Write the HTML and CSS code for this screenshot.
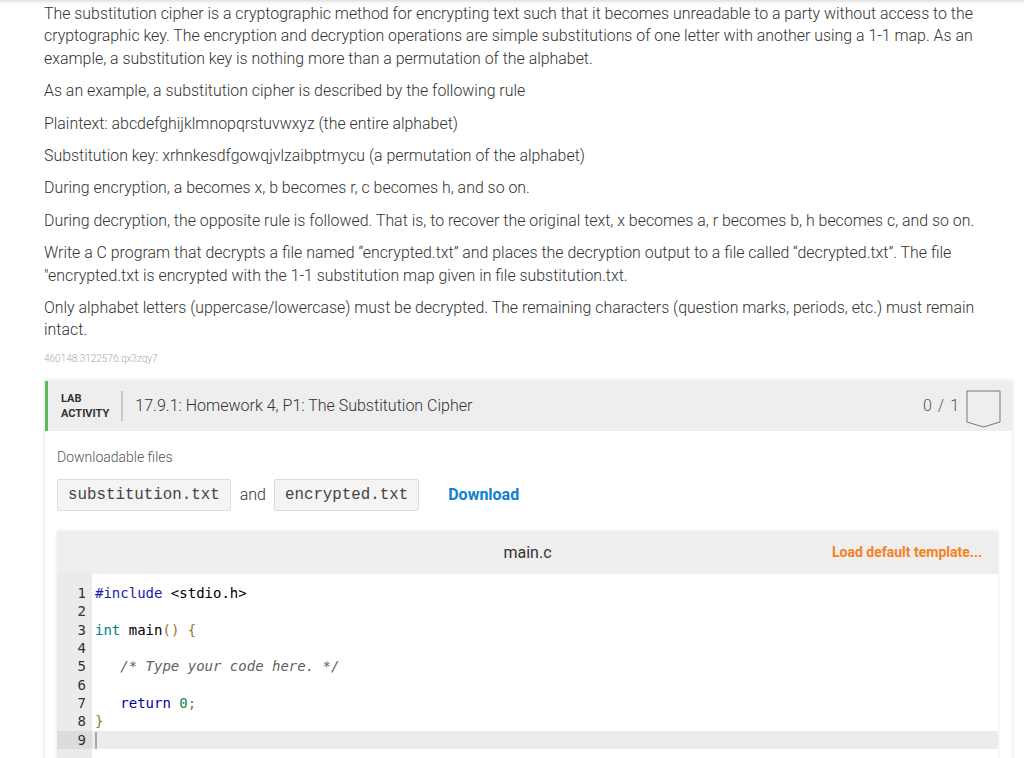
FILE: index.html
```html
<!DOCTYPE html>
<html>
<head>
<meta charset="utf-8">
<link rel="stylesheet" href="styles.css">
</head>
<body>
<div class="page">
  <div class="prose">
    <p>The substitution cipher is a cryptographic method for encrypting text such that it becomes unreadable to a party without access to the cryptographic key. The encryption and decryption operations are simple substitutions of one letter with another using a 1-1 map. As an example, a substitution key is nothing more than a permutation of the alphabet.</p>
    <p>As an example, a substitution cipher is described by the following rule</p>
    <p>Plaintext: abcdefghijklmnopqrstuvwxyz (the entire alphabet)</p>
    <p>Substitution key: xrhnkesdfgowqjvlzaibptmycu (a permutation of the alphabet)</p>
    <p>During encryption, a becomes x, b becomes r, c becomes h, and so on.</p>
    <p>During decryption, the opposite rule is followed. That is, to recover the original text, x becomes a, r becomes b, h becomes c, and so on.</p>
    <p>Write a C program that decrypts a file named “encrypted.txt” and places the decryption output to a file called “decrypted.txt”. The file "encrypted.txt is encrypted with the 1-1 substitution map given in file substitution.txt.</p>
    <p>Only alphabet letters (uppercase/lowercase) must be decrypted. The remaining characters (question marks, periods, etc.) must remain intact.</p>
    <div class="ident">460148.3122576.qx3zqy7</div>
  </div>

  <section class="lab">
    <header class="lab-head">
      <div class="lab-tag">LAB<br>ACTIVITY</div>
      <div class="lab-sep"></div>
      <div class="lab-title">17.9.1: Homework 4, P1: The Substitution Cipher</div>
      <div class="lab-score">0 / 1</div>
      <svg class="badge" width="35" height="38" viewBox="0 0 35 38">
        <path d="M1 1 H34 V32 L17.5 37 L1 32 Z" fill="none" stroke="#777" stroke-width="1"/>
      </svg>
    </header>
    <div class="lab-body">
      <div class="dl-label">Downloadable files</div>
      <div class="dl-row">
        <span class="chip">substitution.txt</span>
        <span class="and">and</span>
        <span class="chip">encrypted.txt</span>
        <a class="download">Download</a>
      </div>

      <div class="editor">
        <div class="ed-head">
          <span></span>
          <span class="ed-file">main.c</span>
          <span class="ed-load">Load default template...</span>
        </div>
        <div class="ed-body">
          <div class="gutter">
            <div class="ln">1</div><div class="ln">2</div><div class="ln">3</div><div class="ln">4</div><div class="ln">5</div><div class="ln">6</div><div class="ln">7</div><div class="ln">8</div><div class="ln active">9</div>
          </div>
          <div class="code">
            <div class="cl"><span class="k-pre">#include</span> &lt;stdio.h&gt;</div>
            <div class="cl">&nbsp;</div>
            <div class="cl"><span class="k-type">int</span> main<span class="k-pun">()</span> <span class="k-pun">{</span></div>
            <div class="cl">&nbsp;</div>
            <div class="cl">   <span class="k-com">/* Type your code here. */</span></div>
            <div class="cl">&nbsp;</div>
            <div class="cl">   <span class="k-kw">return</span> <span class="k-num">0</span><span class="k-pun">;</span></div>
            <div class="cl"><span class="k-pun">}</span></div>
            <div class="cl active"><span class="caret"></span></div>
          </div>
        </div>
      </div>
    </div>
  </section>
</div>
</body>
</html>
```

FILE: styles.css
```css
* { box-sizing: border-box; }
html, body { margin: 0; padding: 0; background: #fff; }
body {
  font-family: Roboto, "Liberation Sans", sans-serif;
  color: #333;
  height: 758px;
  overflow: hidden;
}
.page {
  padding: 3px 12px 0 44px;
  box-shadow: inset 0 4px 4px -3px rgba(0,0,0,0.18);
  min-height: 758px;
}
.prose p {
  margin: 0 0 10px 0;
  font-size: 15.9px;
  line-height: 22.4px;
  font-weight: 300;
  color: #333;
}
.ident {
  font-size: 10px;
  line-height: 14px;
  color: #aaa;
  font-weight: 300;
}
.lab {
  margin: 15px 0 0 1px;
  box-shadow: 0 0 4px rgba(0,0,0,0.15);
  background: #fff;
}
.lab-head {
  display: flex;
  align-items: center;
  height: 50px;
  background: #eee;
  border-left: 3px solid #5cb85c;
  padding: 0 11px 0 13px;
}
.lab-tag {
  font-size: 11px;
  font-weight: 700;
  line-height: 15px;
  color: #333;
  padding-top: 1px;
}
.lab-sep {
  width: 2px;
  height: 30px;
  background: #c8c8c8;
  margin: 0 12px 0 12px;
}
.lab-title {
  flex: 1;
  font-size: 16px;
  font-weight: 300;
  color: #333;
}
.lab-score {
  font-size: 16px;
  font-weight: 300;
  color: #555;
  letter-spacing: 1px;
  margin-right: 6px;
}
.badge { display: block; margin-top: 6px; }
.lab-body {
  padding: 18px 14px 0 12px;
}
.dl-label {
  font-size: 14px;
  font-weight: 300;
  color: #555;
  line-height: 16px;
}
.dl-row {
  display: flex;
  align-items: center;
  margin-top: 14px;
}
.chip {
  display: inline-block;
  height: 32px;
  line-height: 30px;
  padding: 0 10px 0 10px;
  background: #f4f4f4;
  border: 1px solid #dcdcdc;
  border-radius: 2px;
  font-family: "Liberation Mono", "Courier New", monospace;
  font-size: 15.8px;
  color: #444;
}
.and {
  font-size: 16px;
  font-weight: 300;
  color: #333;
  margin: 0 8px 0 9px;
}
.download {
  margin-left: 29px;
  font-size: 16px;
  font-weight: 700;
  color: #0e80d0;
}
.editor {
  margin-top: 20px;
  box-shadow: 0 0 3px rgba(0,0,0,0.12);
}
.ed-head {
  display: grid;
  grid-template-columns: 1fr auto 1fr;
  align-items: center;
  height: 43px;
  background: #eee;
  padding: 0 16px;
}
.ed-file {
  font-size: 16px;
  font-weight: 400;
  color: #333;
}
.ed-load {
  justify-self: end;
  font-size: 14px;
  font-weight: 700;
  color: #f5821f;
}
.ed-body {
  display: flex;
  background: #fff;
  min-height: 200px;
}
.gutter {
  width: 35px;
  background: #ebebeb;
  padding-top: 10px;
  font-family: "DejaVu Sans Mono", monospace;
  font-size: 14px;
}
.ln {
  height: 18.35px;
  line-height: 18.35px;
  text-align: right;
  padding-right: 6px;
  color: #333;
}
.ln.active { background: #dcdcdc; }
.code {
  flex: 1;
  padding-top: 10px;
  font-family: "DejaVu Sans Mono", monospace;
  font-size: 14px;
  color: #000;
}
.cl {
  height: 18.35px;
  line-height: 18.35px;
  white-space: pre;
  padding-left: 3px;
}
.cl.active { background: #ececec; }
.caret {
  display: inline-block;
  width: 2px;
  height: 17px;
  background: #aaa;
  vertical-align: middle;
}
.k-pre { color: #1a1aa6; }
.k-type { color: #008080; }
.k-pun { color: #8a7a36; }
.k-com { color: #5f5f5f; font-style: italic; }
.k-kw { color: #0000a8; }
.k-num { color: #098658; }
```
